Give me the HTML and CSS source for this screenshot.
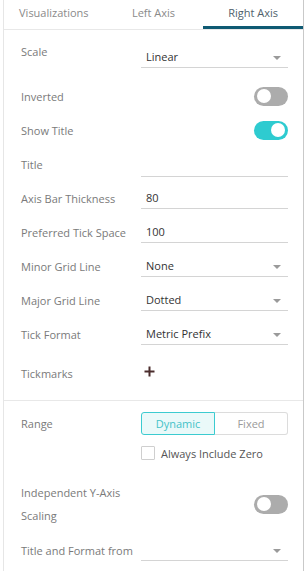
FILE: index.html
```html
<!DOCTYPE html>
<html lang="en">
<head>
  <meta charset="UTF-8" />
  <meta name="viewport" content="width=device-width, initial-scale=1.0" />
  <title>Right Axis Settings</title>
  <link rel="stylesheet" href="styles.css">
</head>
<body>

  <div class="panel">
    <div class="tabs">
      <div class="tab">Visualizations</div>
      <div class="tab">Left Axis</div>
      <div class="tab active">Right Axis</div>
    </div>

    <div class="section">
      <div class="row row-first">
        <div class="label label-raised">Scale</div>
        <div class="field select">Linear<span class="arrow"></span></div>
      </div>
      <div class="row">
        <div class="label">Inverted</div>
        <div class="toggle-cell"><span class="toggle"></span></div>
      </div>
      <div class="row">
        <div class="label">Show Title</div>
        <div class="toggle-cell"><span class="toggle on"></span></div>
      </div>
      <div class="row">
        <div class="label">Title</div>
        <div class="field field-low"></div>
      </div>
      <div class="row">
        <div class="label">Axis Bar Thickness</div>
        <div class="field">80</div>
      </div>
      <div class="row">
        <div class="label">Preferred Tick Space</div>
        <div class="field">100</div>
      </div>
      <div class="row">
        <div class="label">Minor Grid Line</div>
        <div class="field select">None<span class="arrow"></span></div>
      </div>
      <div class="row">
        <div class="label">Major Grid Line</div>
        <div class="field select">Dotted<span class="arrow"></span></div>
      </div>
      <div class="row">
        <div class="label">Tick Format</div>
        <div class="field select">Metric Prefix<span class="arrow"></span></div>
      </div>
      <div class="row row-tall">
        <div class="label">Tickmarks</div>
        <div class="add">
          <svg width="11" height="11" viewBox="0 0 11 11">
            <path d="M5.5 0.5v10M0.5 5.5h10" stroke="#4b2d2d" stroke-width="2" fill="none"/>
          </svg>
        </div>
      </div>
    </div>

    <div class="section section-range">
      <div class="row">
        <div class="label">Range</div>
        <div class="segments">
          <div class="segment selected">Dynamic</div>
          <div class="segment">Fixed</div>
        </div>
      </div>
      <div class="row row-check">
        <div></div>
        <label class="check"><span class="box"></span>Always Include Zero</label>
      </div>
      <div class="row row-wrap">
        <div class="label label-wrap">Independent Y-Axis Scaling</div>
        <div class="toggle-cell"><span class="toggle"></span></div>
      </div>
      <div class="row row-last">
        <div class="label">Title and Format from</div>
        <div class="field select"><span class="arrow"></span></div>
      </div>
    </div>
  </div>

</body>
</html>
```

FILE: styles.css
```css
body {
  margin: 0;
  font-family: 'Open Sans', 'Noto Sans', sans-serif;
  font-size: 11px;
  color: #333;
  background: #fff;
}

.panel {
  margin-left: 3px;
  width: 299px;
  height: 571px;
  border-left: 1px solid #e6e6e6;
  border-right: 1px solid #c9c9c9;
}

.tabs {
  display: flex;
  border-bottom: 1px solid #e8e8e8;
}

.tab {
  flex: 1;
  height: 26px;
  line-height: 26px;
  text-align: center;
  color: #8a8a8a;
  border-bottom: 3px solid transparent;
}

.tab.active {
  color: #4f5f6b;
  border-bottom-color: #0f5a73;
}

.section {
  padding: 10px 15px 5px 17px;
  border-bottom: 1px solid #e8e8e8;
}

.section-range {
  border-bottom: none;
  padding-top: 5px;
}

.row {
  display: grid;
  grid-template-columns: 120px 147px;
  align-items: center;
  height: 34px;
}

.row-first { margin-bottom: 5px; }
.row-tall { height: 44px; }
.row-check { height: 26px; }
.row-wrap { height: 46px; margin-top: 15px; }
.row-last { margin-top: 6px; }

.label {
  color: #7a7a7a;
  white-space: nowrap;
}

.label-raised {
  align-self: start;
  padding-top: 4px;
}

.label-wrap {
  white-space: normal;
  line-height: 23px;
  width: 105px;
}

.field {
  position: relative;
  height: 21px;
  line-height: 22px;
  padding-left: 5px;
  border-bottom: 1px solid #d4d4d4;
  color: #333;
}

.field-low { margin-top: 4px; }

.arrow {
  position: absolute;
  right: 7px;
  top: 10px;
  width: 0;
  height: 0;
  border-left: 4px solid transparent;
  border-right: 4px solid transparent;
  border-top: 4px solid #9a9a9a;
}

.toggle-cell {
  display: flex;
  justify-content: flex-end;
}

.toggle {
  position: relative;
  width: 34px;
  height: 19px;
  border-radius: 10px;
  background: #acacac;
}

.toggle::after {
  content: "";
  position: absolute;
  left: 3px;
  top: 2.5px;
  width: 14px;
  height: 14px;
  border-radius: 50%;
  background: #fff;
}

.toggle.on { background: #2ecbd0; }
.toggle.on::after { left: 17px; }

.add {
  padding-left: 3px;
  margin-top: -6px;
  height: 11px;
}

.segments {
  display: flex;
  height: 23px;
}

.segment {
  flex: 1;
  line-height: 21px;
  text-align: center;
  border: 1px solid #dcdcdc;
  border-left: none;
  border-radius: 0 3px 3px 0;
  color: #9a9a9a;
}

.segment.selected {
  border: 1px solid #3ccbd0;
  border-radius: 3px 0 0 3px;
  background: #eaf9f9;
  color: #45c2c8;
}

.check {
  display: flex;
  align-items: center;
  color: #555;
}

.box {
  width: 12px;
  height: 12px;
  border: 1px solid #cfcfcf;
  border-radius: 1px;
  margin-right: 6px;
}
```
